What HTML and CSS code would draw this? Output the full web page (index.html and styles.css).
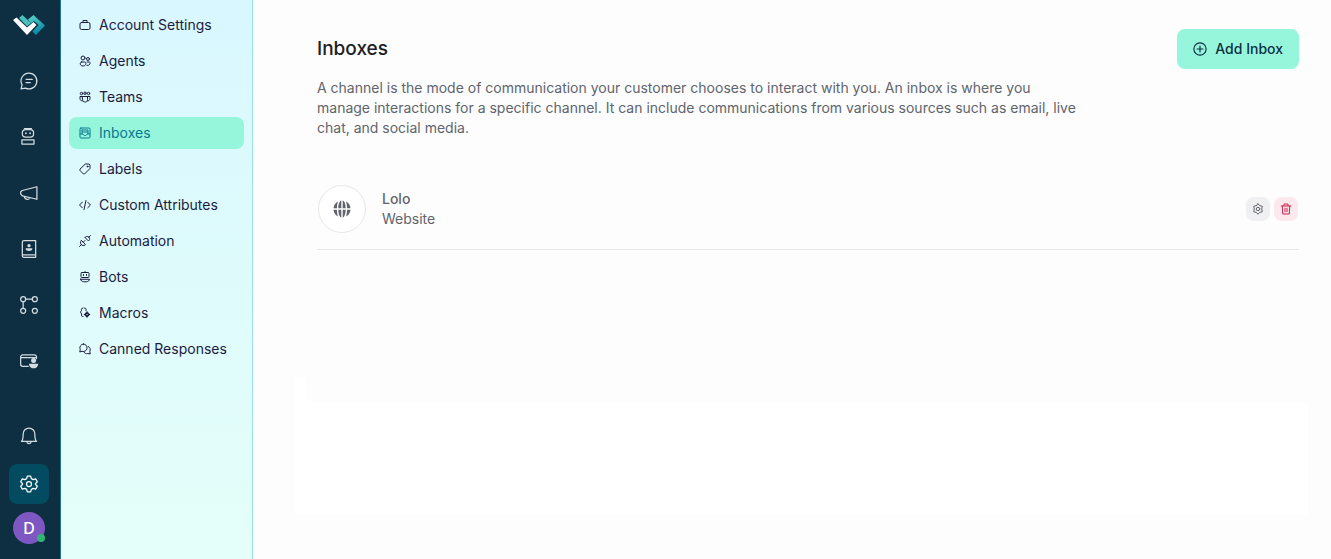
FILE: index.html
```html
<!DOCTYPE html>
<html lang="en">

<head>
    <meta charset="UTF-8">
    <meta name="viewport" content="width=device-width, initial-scale=1.0">
    <title>Inboxes</title>

    <link rel="stylesheet" href="styles.css">
</head>

<body>
    <!-- Main navigation -->
    <nav class="rail" aria-label="Main">
        <a class="logo" href="#" aria-label="Home">
            <svg width="32" height="22" viewBox="0 0 32 22">
                <defs>
                    <linearGradient id="logo-fill" x1="0" y1="0" x2="0.4" y2="1">
                        <stop offset="0" stop-color="#5fd9c6"/>
                        <stop offset="1" stop-color="#0785a8"/>
                    </linearGradient>
                </defs>
                <path d="M6 4l3.500-3L18 9l-4 3.500z" fill="#48bfbb"/>
                <path d="M15 5.500L20.500 1l11.500 10.500L23 21l-3.500-3.500 6-6.500-4.500-4-3 2.500z" fill="url(#logo-fill)"/>
                <path d="M0 6l3.500-2.500L14 13.500 20.500 8l3 3L14 21z" fill="#fff"/>
            </svg>
        </a>
        <a class="rail-item" href="#" aria-label="Conversations">
            <svg class="icon" viewBox="0 0 24 24"><path d="M12 2.500a9.500 9.500 0 1 1-4.300 18L2.500 21.500l1.200-4.800A9.500 9.500 0 0 1 12 2.500zM8.500 10h7.500M8.500 14h5"/></svg>
        </a>
        <a class="rail-item" href="#" aria-label="Captain">
            <svg class="icon" viewBox="0 0 24 24"><rect x="4" y="3" width="13.500" height="9" rx="4"/><path d="M6.500 2h8.500M3.500 15.500h14.500v5h-14.500z"/><path d="M8.300 7.200v.6M13.300 7.200v.6" stroke-width="2"/></svg>
        </a>
        <a class="rail-item" href="#" aria-label="Campaigns">
            <svg class="icon" viewBox="0 0 24 24"><path d="M21.500 4.500v15L4 15.500 2 13v-2.500L4 9zM6.500 16.200c0 4 6 4.500 6.500 1.500"/></svg>
        </a>
        <a class="rail-item" href="#" aria-label="Contacts">
            <svg class="icon" viewBox="0 0 24 24"><path d="M4 20V4a2 2 0 0 1 2-2h14v20H6a2 2 0 0 1-2-2zM4 19h16" /><g class="solid"><circle cx="12" cy="8" r="2"/><path d="M8 11h8v1c0 3-8 3-8 0z"/></g></svg>
        </a>
        <a class="rail-item" href="#" aria-label="Pipelines">
            <svg class="icon" viewBox="0 0 24 24"><circle cx="5" cy="5" r="3"/><circle cx="19" cy="5" r="3"/><circle cx="5" cy="19" r="3"/><circle cx="19" cy="19" r="3"/><path d="M8 5h8M5 8v8"/></svg>
        </a>
        <a class="rail-item" href="#" aria-label="Customers">
            <svg class="icon" viewBox="0 0 24 24"><path d="M11 18.500H4.500a2.500 2.500 0 0 1-2.500-2.500V7a2.500 2.500 0 0 1 2.500-2.500h14A2.500 2.500 0 0 1 21 7v2M2 8h19"/><g class="solid"><circle cx="17.500" cy="11.500" r="3"/><path d="M12 15.200h11c0 7.500-11 7.500-11 0z"/></g></svg>
        </a>
        <div class="rail-bottom">
            <a class="rail-item" href="#" aria-label="Notifications">
                <svg class="icon" viewBox="0 0 24 24"><path d="M3 18.500c2-2 2-4 2-9a7 7 0 0 1 14 0c0 5 0 7 2 9zM9.500 19c.5 3 4.500 3 5 0"/></svg>
            </a>
            <a class="rail-item active" href="#" aria-label="Settings">
                <svg class="icon" viewBox="0 0 24 24"><path d="M10 2.500h4l.8 3 2.200 1.200 3-.8 2 3.400-2.200 2.200v1l2.200 2.200-2 3.400-3-.8-2.200 1.200-.8 3h-4l-.8-3L7 17.300l-3 .8-2-3.400 2.200-2.200v-1L2 9.300l2-3.400 3 .8 2.200-1.200z"/><circle cx="12" cy="12" r="3"/></svg>
            </a>
            <button class="avatar" type="button" aria-label="Profile">D<span class="status"></span></button>
        </div>
    </nav>

    <!-- Settings menu -->
    <nav class="sidebar" aria-label="Settings">
        <a class="menu-item" href="#">
            <svg class="icon" viewBox="0 0 24 24"><rect x="2" y="7" width="20" height="14" rx="3"/><path d="M8 7V3h8v4"/></svg>
            Account Settings
        </a>
        <a class="menu-item" href="#">
            <svg class="icon" viewBox="0 0 24 24"><circle cx="8" cy="6" r="4"/><circle cx="18" cy="8" r="3"/><path d="M5 14h6c4 0 4 8-3 8s-7-8-3-8zM16 14h4c4 0 3 7-4 7"/></svg>
            Agents
        </a>
        <a class="menu-item" href="#">
            <svg class="icon" viewBox="0 0 24 24"><circle cx="5" cy="5" r="2.500"/><circle cx="12" cy="4.500" r="2.500"/><circle cx="19" cy="5" r="2.500"/><path d="M7 11h10v6c0 7-10 7-10 0zM7 11H2v4c0 3 2 5 5 5M17 11h5v4c0 3-2 5-5 5"/></svg>
            Teams
        </a>
        <a class="menu-item active" href="#">
            <svg class="icon" viewBox="0 0 24 24"><rect x="2" y="2" width="20" height="20" rx="2"/><path d="M6 6h12v7M6 6v7M7 10h10M2 14h6c1 4 7 4 8 0h6"/></svg>
            Inboxes
        </a>
        <a class="menu-item" href="#">
            <svg class="icon" viewBox="0 0 24 24"><path d="M13.500 2H20l2 2v7L11 22H9l-7-7v-2z"/><circle cx="17" cy="7" r="1"/></svg>
            Labels
        </a>
        <a class="menu-item" href="#">
            <svg class="icon" viewBox="0 0 24 24"><path d="M6.500 6.500L1 12l5.500 5.500M17.500 6.500L23 12l-5.500 5.500M14 3l-4 18"/></svg>
            Custom Attributes
        </a>
        <a class="menu-item" href="#">
            <svg class="icon" viewBox="0 0 24 24"><path d="M1 23l4-4M23 1l-4 4M5 11l8 8-1 1c-5 4-12-3-8-8zM12 5l7 7 1-1c4-5-2-11-7-7zM9 14l3-3"/></svg>
            Automation
        </a>
        <a class="menu-item" href="#">
            <svg class="icon" viewBox="0 0 24 24"><rect x="4" y="3" width="16" height="10" rx="2"/><path d="M12 1v2M9 7v2M15 7v2M3 16.500h18c1 7-19 7-18 0z"/></svg>
            Bots
        </a>
        <a class="menu-item" href="#">
            <svg class="icon" viewBox="0 0 24 24"><path d="M8 2C4 2 5 5 5 7s-3 3-3 3 3 1 3 4-1 5 3 5M11 2c4 0 3 3 3 5"/><circle cx="16" cy="15" r="3" stroke-width="3"/><path d="M16 10v2M16 18v2M11 15h2M19 15h2" stroke-width="3"/></svg>
            Macros
        </a>
        <a class="menu-item" href="#">
            <svg class="icon" viewBox="0 0 24 24"><path d="M9 2a7.500 7.500 0 1 1-3 14.500L1.500 18l1-5A7.500 7.500 0 0 1 9 2zM18.500 7c4 2 5 6 3 10l1 5-5-1c-3 1-6 0-8-3"/></svg>
            Canned Responses
        </a>
    </nav>

    <main class="content">
        <header class="page-header">
            <div class="title-row">
                <h1>Inboxes</h1>
                <button class="add-button" type="button">
                    <svg class="icon" viewBox="0 0 24 24"><circle cx="12" cy="12" r="10.500"/><path d="M12 7v10M7 12h10"/></svg>
                    Add Inbox
                </button>
            </div>
            <p class="description">A channel is the mode of communication your customer chooses to interact with you. An inbox is where you manage interactions for a specific channel. It can include communications from various sources such as email, live chat, and social media.</p>
        </header>

        <ul class="inbox-list">
            <li class="inbox">
                <span class="channel">
                    <svg width="18" height="18" viewBox="0 0 18 18" fill="#60646c"><path d="M5 1.500A8.500 8.500 0 0 0 .5 8.300h3.400C4 5.500 4.400 3.400 5 1.500zM5 16.500A8.500 8.500 0 0 1 .5 9.700h3.400c.1 2.800.5 4.900 1.100 6.800zM13 1.500a8.500 8.500 0 0 1 4.500 6.800h-3.400C14 5.500 13.600 3.400 13 1.500zM13 16.500a8.500 8.500 0 0 0 4.500-6.800h-3.400c-.1 2.800-.5 4.900-1.100 6.800zM8.300.5v7.800h-3C5.400 4 6.500 1 8.300.5zM9.700.5v7.800h3C12.600 4 11.500 1 9.700.5zM8.300 17.500V9.700h-3c.1 4.300 1.200 7.300 3 7.800zM9.700 17.500V9.700h3c-.1 4.300-1.200 7.300-3 7.800z"/></svg>
                </span>
                <div class="inbox-info">
                    <h2>Lolo</h2>
                    <p>Website</p>
                </div>
                <div class="actions">
                    <button class="action" type="button" aria-label="Settings">
                        <svg class="icon" viewBox="0 0 24 24"><path d="M12 1.500L15 5l5.500 1.500L19.500 12l1 5.500L15 19l-3 3.500L9 19l-5.500-1.500 1-5.500-1-5.500L9 5z"/><circle cx="12" cy="12" r="3.500"/></svg>
                    </button>
                    <button class="action delete" type="button" aria-label="Delete">
                        <svg class="icon" viewBox="0 0 24 24"><path d="M2.500 6h19M8 5.500V2h8v3.500M4.500 6l1 16h13l1-16M10 10.500v7M14 10.500v7"/></svg>
                    </button>
                </div>
            </li>
        </ul>

        <div class="panel">
            <div class="panel-tab"></div>
            <div class="panel-body"></div>
        </div>
    </main>
</body>

</html>
```
FILE: styles.css
```css
* {
    padding: 0;
    margin: 0;
    box-sizing: border-box;
}

body {
    display: flex;
    min-height: 100vh;
    font-family: Inter, "Liberation Sans", sans-serif;
    font-size: 14px;
    line-height: 20px;
    color: #60646c;
    background-color: #fdfdfd;
}

a {
    color: inherit;
    text-decoration: none;
}

button {
    border: none;
    font: inherit;
    cursor: pointer;
}

.icon {
    display: block;
    flex-shrink: 0;
    width: 20px;
    height: 20px;
    fill: none;
    stroke: currentColor;
    stroke-width: 1.5;
    stroke-linejoin: round;
    stroke-linecap: round;
}

.icon .solid {
    fill: currentColor;
    stroke: none;
}

/* Main navigation */
.rail {
    display: flex;
    flex-direction: column;
    align-items: center;
    gap: 16px;
    flex-shrink: 0;
    width: 61px;
    padding: 5px 2px 15px 0;
    color: #d5dde1;
    background-color: #0d2f41;
    border-right: 1px solid #20788e;
}

.logo,
.rail-item {
    display: flex;
    align-items: center;
    justify-content: center;
    width: 40px;
    height: 40px;
    border-radius: 8px;
}

.rail-item.active {
    color: white;
    background-color: #024b60;
}

.rail-bottom {
    display: flex;
    flex-direction: column;
    align-items: center;
    gap: 8px;
    margin-top: auto;
}

.rail-item .icon {
    width: 20px;
    height: 20px;
}

.avatar {
    position: relative;
    width: 32px;
    height: 32px;
    border-radius: 50%;
    font-size: 16px;
    font-weight: 500;
    color: white;
    background-color: #7e57c2;
}

.status {
    position: absolute;
    right: 0;
    bottom: 2px;
    width: 8px;
    height: 8px;
    border-radius: 50%;
    background-color: #30b577;
}

/* Settings menu */
.sidebar {
    display: flex;
    flex-direction: column;
    gap: 4px;
    flex-shrink: 0;
    width: 192px;
    padding: 9px 8px;
    color: #1b1b3f;
    background: linear-gradient(#d9f7ff, #e4fff9);
    border-right: 1px solid #98e2e9;
}

.menu-item {
    display: flex;
    align-items: center;
    gap: 8px;
    height: 32px;
    padding: 0 10px;
    border-radius: 8px;
    white-space: nowrap;
}

.menu-item .icon {
    width: 12px;
    height: 12px;
    stroke-width: 2;
}

.menu-item.active {
    color: #087990;
    background-color: #96f6dc;
}

/* Page */
.content {
    flex: 1;
    min-width: 0;
    padding: 29px 23px 44px 42px;
}

.page-header,
.inbox-list {
    margin: 0 9px 0 22px;
}

.title-row {
    display: flex;
    align-items: center;
    justify-content: space-between;
    margin-bottom: 9px;
}

h1 {
    font-size: 19px;
    font-weight: 500;
    line-height: 28px;
    color: #1c2024;
}

.add-button {
    display: flex;
    align-items: center;
    gap: 8px;
    height: 40px;
    padding: 0 16px;
    border-radius: 8px;
    font-weight: 500;
    color: #0d2f41;
    background-color: #96f6dc;
}

.add-button .icon {
    width: 14px;
    height: 14px;
    stroke-width: 2;
}

.description {
    max-width: 768px;
}

.inbox-list {
    margin-top: 31px;
    list-style: none;
}

.inbox {
    display: flex;
    align-items: center;
    gap: 16px;
    padding: 16px 1px;
    border-bottom: 1px solid #e6e7ea;
}

.channel {
    display: flex;
    align-items: center;
    justify-content: center;
    width: 48px;
    height: 48px;
    border: 1px solid #e6e7ea;
    border-radius: 50%;
    background-color: white;
}

.inbox-info {
    flex: 1;
}

h2 {
    font-size: 14px;
    font-weight: 500;
}

.actions {
    display: flex;
    gap: 4px;
}

.action {
    display: flex;
    align-items: center;
    justify-content: center;
    width: 24px;
    height: 24px;
    border-radius: 8px;
    color: #60646c;
    background-color: #f0f0f2;
}

.action .icon {
    width: 12px;
    height: 12px;
    stroke-width: 2;
}

.action.delete {
    color: #ca244d;
    background-color: #fbe9ed;
}

.panel {
    margin-top: 127px;
}

.panel-tab {
    width: 12px;
    height: 25px;
    background-color: white;
}

.panel-body {
    height: 113px;
    background-color: white;
}
```
